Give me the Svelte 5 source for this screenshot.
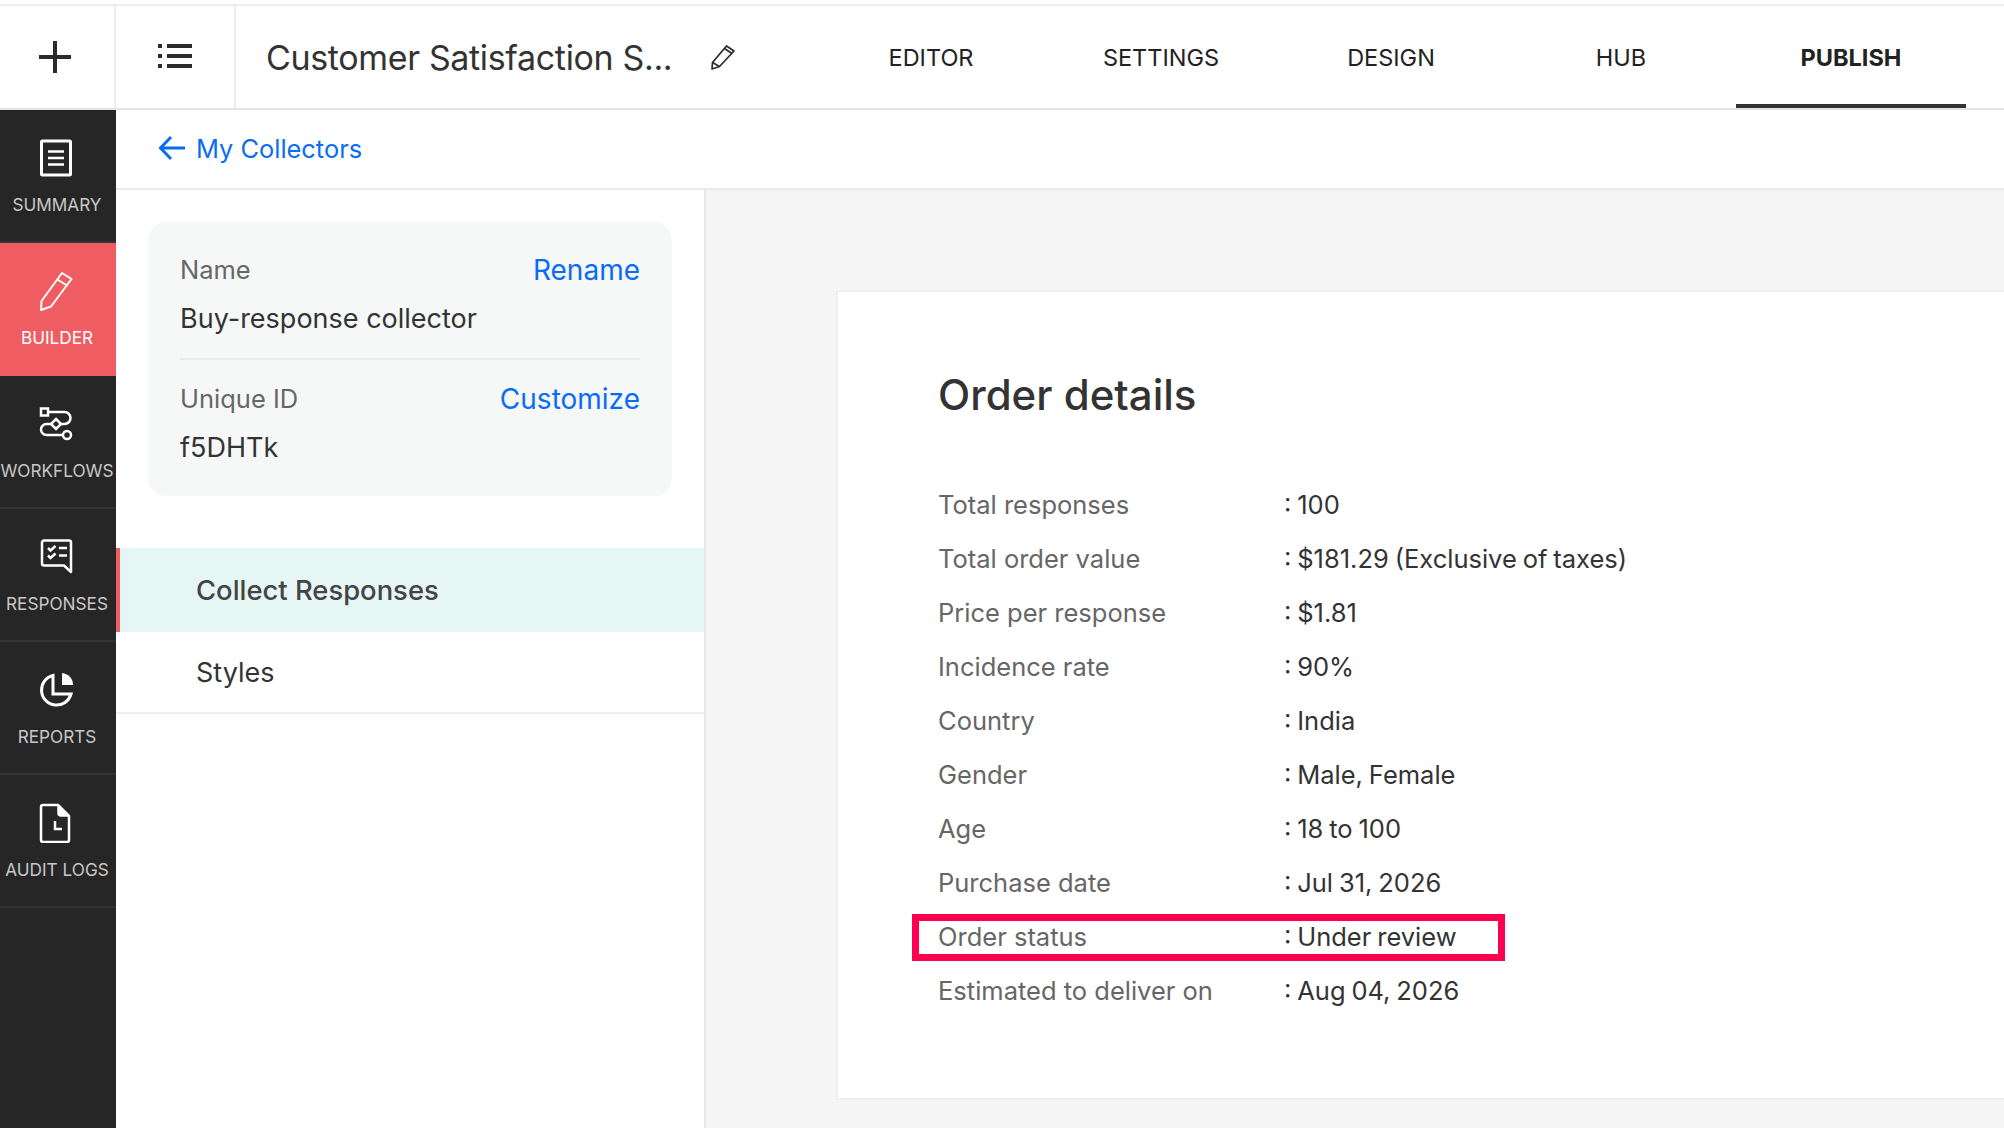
<script>
  const tabs = ['EDITOR', 'SETTINGS', 'DESIGN', 'HUB', 'PUBLISH'];
  const nav = ['SUMMARY', 'BUILDER', 'WORKFLOWS', 'RESPONSES', 'REPORTS', 'AUDIT LOGS'];
  const rows = [
    ['Total responses', '100'],
    ['Total order value', '$181.29 (Exclusive of taxes)'],
    ['Price per response', '$1.81'],
    ['Incidence rate', '90%'],
    ['Country', 'India'],
    ['Gender', 'Male, Female'],
    ['Age', '18 to 100'],
    ['Purchase date', 'Jul 31, 2026'],
    ['Order status', 'Under review'],
    ['Estimated to deliver on', 'Aug 04, 2026']
  ];
</script>

<div class="page">
  <header class="topbar">
    <div class="cell plus">
      <svg width="34" height="34" viewBox="0 0 34 34"><path d="M17 1v32M1 17h32" stroke="#2b2b2b" stroke-width="4" fill="none" /></svg>
    </div>
    <div class="cell list">
      <svg width="34" height="26" viewBox="0 0 34 26" fill="#2b2b2b">
        <rect x="0" y="0" width="4" height="4" /><rect x="9" y="0" width="25" height="4" />
        <rect x="0" y="10" width="4" height="4" /><rect x="9" y="10" width="25" height="4" />
        <rect x="0" y="20" width="4" height="4" /><rect x="9" y="20" width="25" height="4" />
      </svg>
    </div>
    <div class="title">
      <span>Customer Satisfaction S...</span>
      <svg width="26" height="26" viewBox="0 0 26 26" fill="none" stroke="#2b2b2b" stroke-width="1.700" stroke-linejoin="round"><path d="M2 25l.5-6.500L16.500 2 24 7 9.500 22.500z" /><path d="M14.500 4.500l7.500 5M2.500 18.500l7 4" /></svg>
    </div>
    <nav class="tabs">
      {#each tabs as tab}
        <div class="tab" class:active={tab === 'PUBLISH'}>{tab}</div>
      {/each}
    </nav>
  </header>

  <div class="main">
    <aside class="sidebar">
      {#each nav as item}
        <div class="nav-item" class:active={item === 'BUILDER'}>
          <svg width="36" height="40" viewBox="0 0 36 40" fill="none" stroke="#fff" stroke-width="2.500">
            {#if item === 'SUMMARY'}
              <rect x="3.500" y="3" width="29" height="34" rx="1" stroke-width="3" />
              <path d="M10 13.500h16M10 20h16M10 26.500h16" />
            {:else if item === 'BUILDER'}
              <path d="M3 39l.5-9L24 2l9.500 6L13 35.500z" stroke-linejoin="round" stroke-width="2" />
              <path d="M19.500 8.500l9.500 6" stroke-width="2" />
            {:else if item === 'WORKFLOWS'}
              <rect x="3" y="4.500" width="7" height="7" />
              <path d="M10 8h16.500a6 6 0 0 1 0 12H23" />
              <path d="M18 15l5 5-5 5-5-5z" />
              <path d="M13 20H8.500a5.500 5.500 0 0 0 0 11H25" />
              <circle cx="29" cy="31" r="4" />
            {:else if item === 'RESPONSES'}
              <path d="M6 3.500h25a2 2 0 0 1 2 2V35l-7-6.500H6a2 2 0 0 1-2-2V5.500a2 2 0 0 1 2-2z" stroke-linejoin="round" />
              <path d="M10 11l2.500 2.500 5-4.500M10 18.500l2.500 2.500 5-4.500M21 11h8M21 18.500h8" />
            {:else if item === 'REPORTS'}
              <path d="M15 5.500A15 15 0 1 0 33 24H15z" stroke-width="3" />
              <path d="M24 3a12 12 0 0 1 11 12H24z" fill="#fff" stroke="none" />
            {:else}
              <path d="M5 2h15l11 11v24a2 2 0 0 1-2 2H5a2 2 0 0 1-2-2V4a2 2 0 0 1 2-2z" stroke-linejoin="round" />
              <path d="M20 2v8a3 3 0 0 0 3 3h8" fill="#fff" stroke-width="1.500" />
              <path d="M17 18v8h7" />
            {/if}
          </svg>
          <span>{item}</span>
        </div>
      {/each}
    </aside>

    <div class="content">
      <div class="crumb">
        <svg width="27" height="26" viewBox="0 0 27 26" fill="none" stroke="#0a6cf5" stroke-width="3"><path d="M27 13H3M13 2L2.500 13 13 24" /></svg>
        <span>My Collectors</span>
      </div>

      <div class="split">
        <section class="panel">
          <div class="info">
            <div class="info-block">
              <div class="info-head"><span class="muted">Name</span><a href="#rename">Rename</a></div>
              <div class="info-value">Buy-response collector</div>
            </div>
            <div class="info-block">
              <div class="info-head"><span class="muted">Unique ID</span><a href="#customize">Customize</a></div>
              <div class="info-value">f5DHTk</div>
            </div>
          </div>
          <div class="menu-item selected">Collect Responses</div>
          <div class="menu-item">Styles</div>
        </section>

        <section class="preview">
          <div class="card">
            <h1>Order details</h1>
            <div class="rows">
              {#each rows as [label, value]}
                <div class="row" class:flagged={label === 'Order status'}>
                  <span class="label">{label}</span>
                  <span class="value">: {value}</span>
                </div>
              {/each}
            </div>
          </div>
        </section>
      </div>
    </div>
  </div>
</div>

<style>
  :global(body) {
    margin: 0;
    background: #fff;
    overflow: hidden;
  }

  .page {
    width: 2004px;
    height: 1128px;
    display: flex;
    flex-direction: column;
    font-family: Inter, "Liberation Sans", sans-serif;
    color: #333;
    overflow: hidden;
    padding-top: 4px;
    box-sizing: border-box;
  }

  .topbar {
    height: 106px;
    box-sizing: border-box;
    border-top: 2px solid #eee;
    border-bottom: 2px solid #e4e4e4;
    display: flex;
    flex: none;
  }

  .cell {
    display: flex;
    align-items: center;
    justify-content: center;
    border-right: 2px solid #eee;
    box-sizing: border-box;
  }

  .plus { width: 116px; padding-right: 4px; }
  .list { width: 120px; padding-bottom: 1px; }

  .title {
    flex: 1;
    display: flex;
    align-items: center;
    gap: 38px;
    padding-left: 30px;
    font-size: 34px;
    letter-spacing: -0.35px;
  }

  .tabs {
    display: flex;
    padding-right: 38px;
  }

  .tab {
    width: 230px;
    display: flex;
    align-items: center;
    justify-content: center;
    font-size: 23.5px;
    color: #222;
    box-sizing: border-box;
    padding-top: 4px;
    border-bottom: 4px solid transparent;
  }

  .tab.active {
    font-weight: 700;
    border-bottom-color: #333;
  }

  .main {
    flex: 1;
    display: flex;
    min-height: 0;
  }

  .sidebar {
    width: 116px;
    flex: none;
    background: #262626;
  }

  .nav-item {
    height: 133px;
    box-sizing: border-box;
    border-bottom: 2px solid #333;
    display: flex;
    flex-direction: column;
    align-items: center;
    padding: 28px 2px 0 0;
    color: #c8c8c8;
    font-size: 17.2px;
    white-space: nowrap;
  }

  .nav-item svg {
    margin-right: 2px;
  }

  .nav-item span {
    margin-top: 17px;
    line-height: 20px;
  }

  .nav-item.active {
    background: #ef5d63;
    color: #fff;
    border-bottom: none;
  }

  .content {
    flex: 1;
    display: flex;
    flex-direction: column;
    min-width: 0;
  }

  .crumb {
    height: 80px;
    flex: none;
    box-sizing: border-box;
    border-bottom: 2px solid #eaeaea;
    display: flex;
    align-items: center;
    gap: 11px;
    padding: 0 0 2px 42px;
    font-size: 25.4px;
    color: #0a6cf5;
  }

  .split {
    flex: 1;
    display: flex;
    min-height: 0;
  }

  .panel {
    width: 590px;
    flex: none;
    box-sizing: border-box;
    border-right: 2px solid #e8e8e8;
    padding-top: 32px;
  }

  .info {
    margin: 0 32px 52px 32px;
    padding: 16px 32px 0;
    height: 274px;
    box-sizing: border-box;
    background: #f6f8f8;
    border-radius: 18px;
  }

  .info-block {
    padding-top: 23px;
    box-sizing: border-box;
  }

  .info-block:first-child {
    height: 122px;
    padding-top: 16px;
    border-bottom: 2px solid #ebebeb;
  }

  .info-head {
    display: flex;
    justify-content: space-between;
    align-items: center;
    line-height: 32px;
  }

  .muted {
    color: #666;
    font-size: 25.5px;
  }

  a {
    color: #0a6cf5;
    text-decoration: none;
    font-size: 28px;
  }

  .info-value {
    font-size: 27px;
    line-height: 34px;
    margin-top: 16px;
  }

  .menu-item {
    height: 82px;
    box-sizing: border-box;
    display: flex;
    align-items: center;
    padding-left: 80px;
    font-size: 27px;
    border-bottom: 2px solid #eee;
  }

  .menu-item.selected {
    height: 84px;
    background: #e6f6f5;
    border-bottom: none;
    border-left: 4px solid #ef5d63;
    padding-left: 76px;
    font-size: 27.4px;
    font-weight: 500;
    color: #444;
  }

  .preview {
    flex: 1;
    background: #f5f5f5;
    padding: 100px 0 0 130px;
    min-width: 0;
  }

  .card {
    height: 810px;
    box-sizing: border-box;
    background: #fff;
    border: 2px solid #eee;
    border-right: none;
    padding: 71px 0 0 100px;
  }

  h1 {
    margin: 0 0 50px;
    font-size: 42px;
    line-height: 64px;
    font-weight: 500;
    color: #333;
  }

  .row {
    height: 54px;
    display: flex;
    align-items: center;
    font-size: 25.5px;
    position: relative;
  }

  .label {
    width: 346px;
    color: #666;
  }

  .value {
    color: #333;
    word-spacing: -1.3px;
  }

  .row.flagged::after {
    content: '';
    position: absolute;
    left: -26px;
    top: 5px;
    width: 593px;
    height: 47px;
    box-sizing: border-box;
    border: 7px solid #ff0050;
  }
</style>
